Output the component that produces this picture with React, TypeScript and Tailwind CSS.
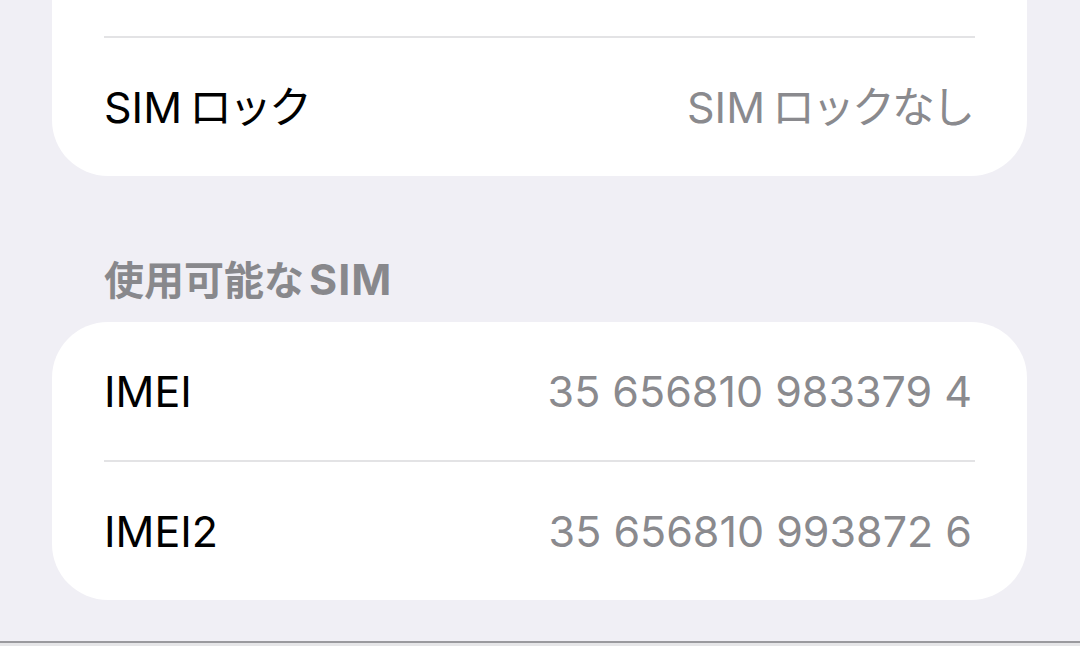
const rowText = "text-[43px] leading-[52px]";

function Label({ text }: { text: string }) {
  // iOS puts a little air between latin and kana
  if (!text.startsWith("SIM")) return <>{text}</>;
  return (
    <>
      SIM<span className="ml-[7px] tracking-[-3px]">{text.slice(3)}</span>
    </>
  );
}

function Row({ label, value }: { label: string; value: string }) {
  return (
    <div className="flex h-[138px] items-center justify-between">
      <span className={`${rowText} text-black`}>
        <Label text={label} />
      </span>
      <span className={`${rowText} pr-[3px] text-[#8a8a8e]`}>
        <Label text={value} />
      </span>
    </div>
  );
}

function Separator() {
  return <div className="h-[2px] bg-[#e3e3e5]" />;
}

export default function App() {
  return (
    <div className="h-[646px] w-[1080px] overflow-hidden bg-[#f0eff5] font-['Inter','Noto_Sans_CJK_JP',sans-serif]">
      {/* Card with device info, top row scrolled out of view */}
      <div className="mx-[52px] -mt-[102px] w-[975px] rounded-[56px] bg-white px-[52px]">
        <div className="h-[138px]" />
        <Separator />
        <Row label="SIMロック" value="SIMロックなし" />
      </div>

      {/* Section header */}
      <div className="h-[146px] px-[104px] pt-[82px]">
        <h2 className="h-[42px] text-[40px] leading-[42px] font-semibold text-[#88888c]">
          使用可能な
          <span className="ml-[5px] text-[43px] leading-[42px] font-bold tracking-[1px]">
            SIM
          </span>
        </h2>
      </div>

      {/* Available SIM card */}
      <div className="mx-[52px] w-[975px] rounded-[56px] bg-white px-[52px]">
        <Row label="IMEI" value="35 656810 983379 4" />
        <Separator />
        <Row label="IMEI2" value="35 656810 993872 6" />
      </div>

      <div className="mt-[41px] h-[2px] bg-[#9a9a9e]" />
      <div className="h-[4px] bg-[#e6e6e8]" />
    </div>
  );
}
